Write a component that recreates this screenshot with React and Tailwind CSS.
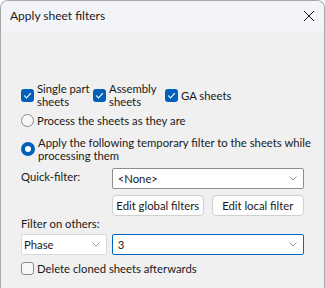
import React from "react";

const Check = () => (
  <span className="w-[13px] h-[13px] rounded-[3px] bg-[#005fb8] flex items-center justify-center shrink-0">
    <svg width="9" height="9" viewBox="0 0 9 9" fill="none">
      <path d="M1.5 4.8 L3.6 6.8 L7.6 2.4" stroke="white" strokeWidth="1.1" strokeLinecap="round" strokeLinejoin="round" />
    </svg>
  </span>
);

const Unchecked = () => (
  <span className="w-[13px] h-[13px] rounded-[3px] border border-[#8a8a8a] bg-[#f7f7f7] shrink-0" />
);

const Chevron = () => (
  <svg width="8" height="5" viewBox="0 0 8 5" fill="none" className="shrink-0">
    <path d="M0.5 0.5 L4 4 L7.5 0.5" stroke="#8a8a8a" strokeWidth="0.9" />
  </svg>
);

export default function App() {
  return (
    <div
      className="w-[325px] h-[288px] bg-[#f0f0f0] border border-b-0 border-[#a8a8a8] rounded-t-[8px] overflow-hidden text-[11.3px] text-[#1a1a1a] whitespace-nowrap"
      style={{ fontFamily: 'Lato, sans-serif' }}
    >
      <div className="h-[30px] bg-[#f3f4f8] flex items-center justify-between pl-[9px] pr-[9px]">
        <span className="leading-[14px] text-[12px]">Apply sheet filters</span>
        <svg width="12" height="12" viewBox="0 0 12 12" fill="none">
          <path d="M1 1 L11 11 M11 1 L1 11" stroke="#1a1a1a" strokeWidth="1" />
        </svg>
      </div>
      <div className="pl-[20px] pr-[20px] pt-[51px] flex flex-col">
        <div className="flex items-center h-[26px] leading-[13px]">
          <Check />
          <span className="ml-[3px] w-[56px]">Single part<br />sheets</span>
          <Check />
          <span className="ml-[3px] w-[56px]">Assembly<br />sheets</span>
          <Check />
          <span className="ml-[3px]">GA sheets</span>
        </div>
        <div className="flex items-center h-[14px] mt-[5px] leading-[13px]">
          <span className="w-[13px] h-[13px] rounded-full border border-[#8a8a8a] bg-[#f7f7f7] shrink-0" />
          <span className="ml-[3px]">Process the sheets as they are</span>
        </div>
        <div className="flex items-center h-[26px] mt-[9px] leading-[13px]">
          <span className="w-[14px] h-[14px] rounded-full bg-[#005fb8] flex items-center justify-center shrink-0">
            <span className="w-[6px] h-[6px] rounded-full bg-white" />
          </span>
          <span className="ml-[3px]">Apply the following temporary filter to the sheets while<br />processing them</span>
        </div>
        <div className="flex items-start mt-[6px]">
          <span className="w-[91px] pt-[2px] leading-[14px]">Quick-filter:</span>
          <div className="w-[193px] h-[21px] bg-white border border-[#8d8d8d] rounded-[2px] flex items-center justify-between pl-[5px] pr-[6px]">
            <span className="leading-[14px]">&lt;None&gt;</span>
            <Chevron />
          </div>
        </div>
        <div className="flex mt-[6px] ml-[91px] gap-[8px]">
          <div className="w-[92px] h-[21px] bg-[#fdfdfd] border border-[#d0d0d0] rounded-[4px] flex items-center justify-center leading-[14px]">Edit global filters</div>
          <div className="w-[93px] h-[21px] bg-[#fdfdfd] border border-[#d0d0d0] rounded-[4px] flex items-center justify-center leading-[14px]">Edit local filter</div>
        </div>
        <div className="mt-[1px] leading-[14px] h-[17px]">Filter on others:</div>
        <div className="flex gap-[5px]">
          <div className="w-[86px] h-[21px] bg-white border border-[#d9d9d9] rounded-[2px] flex items-center justify-between pl-[2px] pr-[6px]">
            <span className="leading-[14px]">Phase</span>
            <Chevron />
          </div>
          <div className="w-[193px] h-[21px] bg-white border border-[#0067c0] rounded-[2px] flex items-center justify-between pl-[5px] pr-[6px]">
            <span className="leading-[14px]">3</span>
            <Chevron />
          </div>
        </div>
        <div className="flex items-center h-[14px] mt-[6px] leading-[13px]">
          <Unchecked />
          <span className="ml-[3px]">Delete cloned sheets afterwards</span>
        </div>
      </div>
    </div>
  );
}
